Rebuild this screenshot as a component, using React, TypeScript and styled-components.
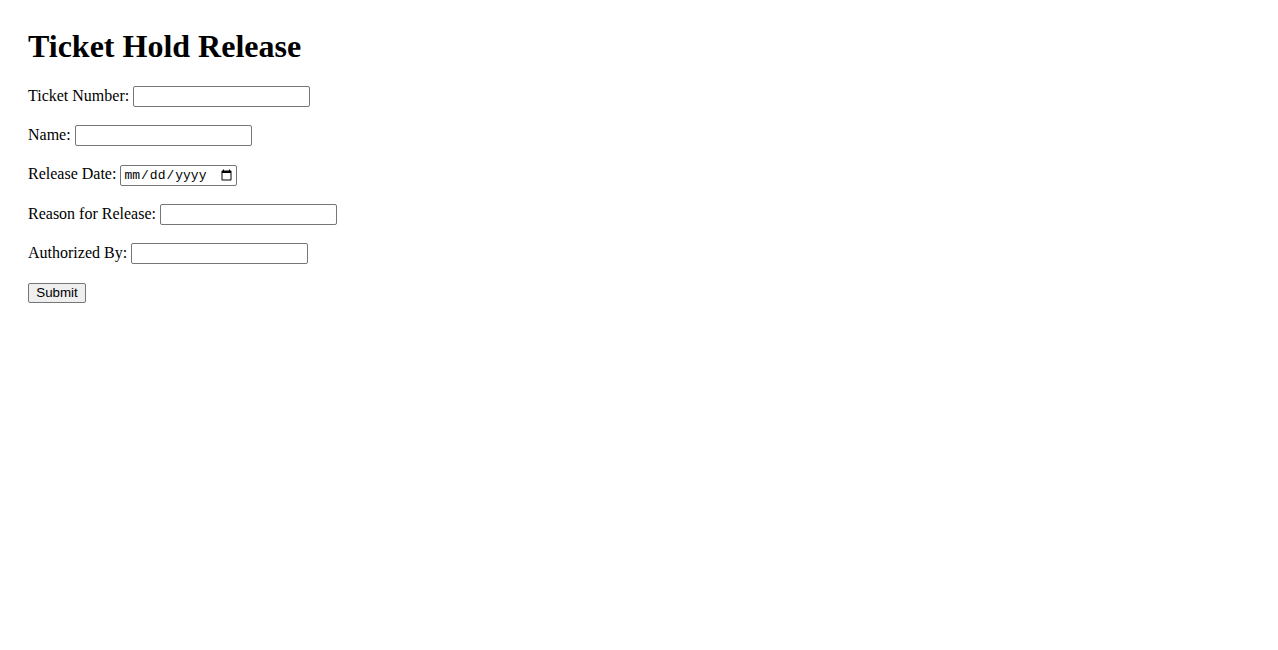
import React from 'react'
import styled, { createGlobalStyle } from 'styled-components'

const GlobalStyle = createGlobalStyle`
  body {
    margin: 0;
    padding: 28px;
    background: #fff;
    color: #000;
    font-family: "Liberation Serif", "Times New Roman", serif;
    font-size: 16px;
  }
`

const Title = styled.h1`
  margin: 0 0 19px;
  font-size: 32px;
  font-weight: bold;
  line-height: 37px;
`

const Field = styled.p`
  margin: 16px 0;
  line-height: 23px;
`

const Label = styled.label`
  margin-right: 4px;
`

const Input = styled.input<{ $w?: number }>`
  box-sizing: border-box;
  width: ${p => p.$w ?? 177}px;
  height: 21px;
  padding: 1px 2px;
  border: 1px solid #767676;
  border-radius: 2px;
  font-family: "Liberation Sans", Arial, sans-serif;
  font-size: 13.33px;
  vertical-align: baseline;
`

const DateInput = styled(Input)`
  font-family: "Liberation Mono", "Courier New", monospace;
  font-size: 13px;
  padding: 1px 1px 1px 2px;
`

const SubmitButton = styled.button`
  box-sizing: border-box;
  width: 58px;
  height: 20px;
  padding: 0 6px;
  border: 1px solid #767676;
  border-radius: 2px;
  background: #efefef;
  color: #000;
  font-family: "Liberation Sans", Arial, sans-serif;
  font-size: 13.33px;
`

const fields = [
  { id: 'ticket', label: 'Ticket Number:' },
  { id: 'name', label: 'Name:' },
  { id: 'date', label: 'Release Date:', date: true },
  { id: 'reason', label: 'Reason for Release:' },
  { id: 'auth', label: 'Authorized By:' },
]

export default function App() {
  return (
    <>
      <GlobalStyle />
      <Title>Ticket Hold Release</Title>
      <form onSubmit={e => e.preventDefault()}>
        {fields.map(f => (
          <Field key={f.id}>
            <Label htmlFor={f.id}>{f.label}</Label>
            {f.date ? <DateInput id={f.id} type="date" $w={117} /> : <Input id={f.id} type="text" />}
          </Field>
        ))}
        <Field>
          <SubmitButton type="submit">Submit</SubmitButton>
        </Field>
      </form>
    </>
  )
}
